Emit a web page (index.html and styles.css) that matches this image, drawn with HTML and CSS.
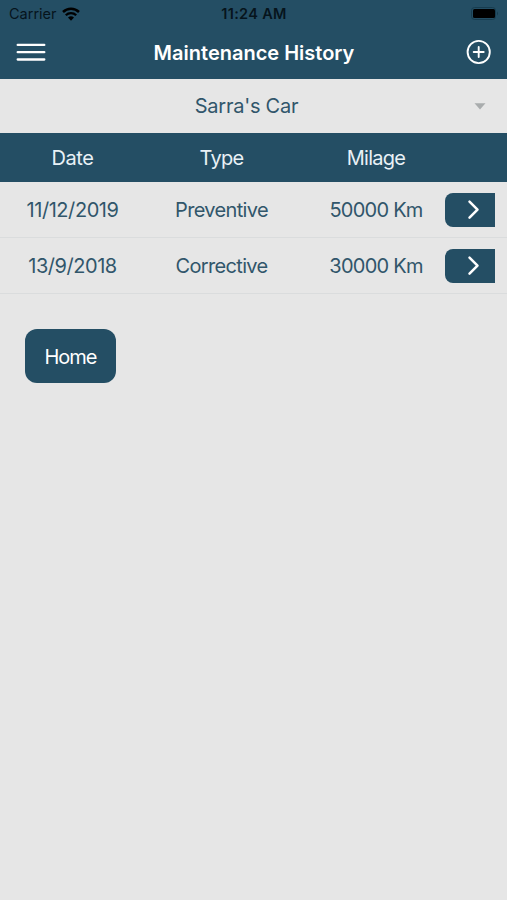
FILE: index.html
```
<!DOCTYPE html>
<html lang="en">
<head>
<meta charset="UTF-8">
<meta name="viewport" content="width=device-width, initial-scale=1.0">
<title>Maintenance History</title>
<link rel="stylesheet" href="styles.css">
</head>
<body>
    <div class="header">
        <div class="status-bar">
            <div class="carrier">
                <span>Carrier</span>
                <svg class="wifi" width="18" height="14" viewBox="0 0 18 14">
                    <path d="M1 5 A11.5 11.5 0 0 1 17 5" fill="none" stroke="#000" stroke-width="2.5"/>
                    <path d="M3.8 8.2 A7.4 7.4 0 0 1 14.2 8.2" fill="none" stroke="#000" stroke-width="2.3"/>
                    <path d="M6 10.6 A4.3 4.3 0 0 1 12 10.6 L9 13.8 Z" fill="#000"/>
                </svg>
            </div>
            <div class="clock">11:24 AM</div>
            <svg class="battery" width="29" height="13" viewBox="0 0 29 13">
                <rect x="0.5" y="0.5" width="24" height="12" rx="3" fill="none" stroke="#173c4f"/>
                <rect x="2" y="2" width="22" height="9" rx="1.5" fill="#000"/>
                <path d="M26 4.5 Q28 6.5 26 8.5 Z" fill="#173c4f"/>
            </svg>
        </div>
        <div class="nav-bar">
            <svg class="menu" width="30" height="20" viewBox="0 0 30 20">
                <path d="M1.7 2.9 H28.3 M1.7 10.2 H28.3 M1.7 17.5 H28.3" stroke="#fff" stroke-width="2.3" stroke-linecap="round"/>
            </svg>
            <div class="title">Maintenance History</div>
            <svg class="add" width="26" height="26" viewBox="0 0 26 26">
                <circle cx="12.7" cy="13" r="11.1" fill="none" stroke="#fff" stroke-width="1.9"/>
                <path d="M12.7 8 V18 M7.7 13 H17.7" stroke="#fff" stroke-width="1.9" stroke-linecap="round"/>
            </svg>
        </div>
    </div>
    <div class="picker">
        <div class="picker-label">Sarra's Car</div>
        <svg class="arrow" width="12" height="7" viewBox="0 0 12 7">
            <path d="M0.5 0.3 H11.5 L6 6.5 Z" fill="#a9acad"/>
        </svg>
    </div>
    <div class="row table-header">
        <div class="cell date">Date</div>
        <div class="cell type">Type</div>
        <div class="cell milage">Milage</div>
    </div>
    <div class="row">
        <div class="cell date">11/12/2019</div>
        <div class="cell type">Preventive</div>
        <div class="cell milage">50000 Km</div>
        <div class="details">
            <svg width="14" height="22" viewBox="0 0 14 22">
                <path d="M2.5 2.7 L10.5 10.7 L2.5 18.7" fill="none" stroke="#fff" stroke-width="2.5" stroke-linecap="round" stroke-linejoin="round"/>
            </svg>
        </div>
    </div>
    <div class="row">
        <div class="cell date">13/9/2018</div>
        <div class="cell type">Corrective</div>
        <div class="cell milage">30000 Km</div>
        <div class="details">
            <svg width="14" height="22" viewBox="0 0 14 22">
                <path d="M2.5 2.7 L10.5 10.7 L2.5 18.7" fill="none" stroke="#fff" stroke-width="2.5" stroke-linecap="round" stroke-linejoin="round"/>
            </svg>
        </div>
    </div>
    <div class="home">Home</div>
</body>
</html>
```
FILE: styles.css
```
body {
    margin: 0;
    background-color: #e6e6e6;
    color: #31566b;
    font-family: Inter, "Liberation Sans", sans-serif;
    font-size: 20px;
    line-height: 24px;
}
svg {
    display: block;
}
.header {
    height: 79px;
    background-color: #244e64;
    color: #fff;
}
.status-bar {
    display: grid;
    grid-template-columns: 1fr auto 1fr;
    height: 27px;
    align-items: center;
    padding: 0 8px 0 9px;
    box-sizing: border-box;
    color: #06141c;
    font-size: 14.5px;
}
.carrier {
    display: flex;
    align-items: center;
    gap: 5px;
}
.clock {
    font-weight: 600;
    letter-spacing: 0.3px;
}
.battery {
    justify-self: end;
    margin-right: -1px;
}
.nav-bar {
    display: flex;
    justify-content: space-between;
    align-items: center;
    height: 50px;
    padding: 0 15px 0 16px;
}
.title {
    padding-top: 1px;
    margin-left: -4px;
    font-weight: 600;
}
.picker {
    display: grid;
    grid-template-columns: 1fr auto 1fr;
    align-items: center;
    height: 54px;
    padding: 0 21px;
}
.picker-label {
    grid-column: 2;
    margin-left: -14px;
    letter-spacing: -0.25px;
}
.arrow {
    justify-self: end;
}
.row {
    display: grid;
    grid-template-columns: 145px 153px 156px 1fr;
    align-items: center;
    height: 56px;
    box-sizing: border-box;
    border-bottom: 1px solid #dadcdd;
}
.cell {
    text-align: center;
}
.date {
    letter-spacing: -0.45px;
}
.type {
    letter-spacing: -0.65px;
}
.milage {
    letter-spacing: -0.75px;
}
.table-header {
    height: 49px;
    border: none;
    background-color: #244e64;
    color: #e9f1f6;
}
.details {
    display: flex;
    justify-content: center;
    align-items: center;
    width: 50px;
    height: 34px;
    margin-left: -9px;
    padding-left: 7px;
    box-sizing: border-box;
    border-radius: 8px 0 0 8px;
    background-color: #244e64;
}
.home {
    width: 91px;
    margin: 35px 0 0 25px;
    padding: 16px 0 14px;
    border-radius: 12px;
    background-color: #244e64;
    color: #fff;
    letter-spacing: -1px;
    text-align: center;
}
```
